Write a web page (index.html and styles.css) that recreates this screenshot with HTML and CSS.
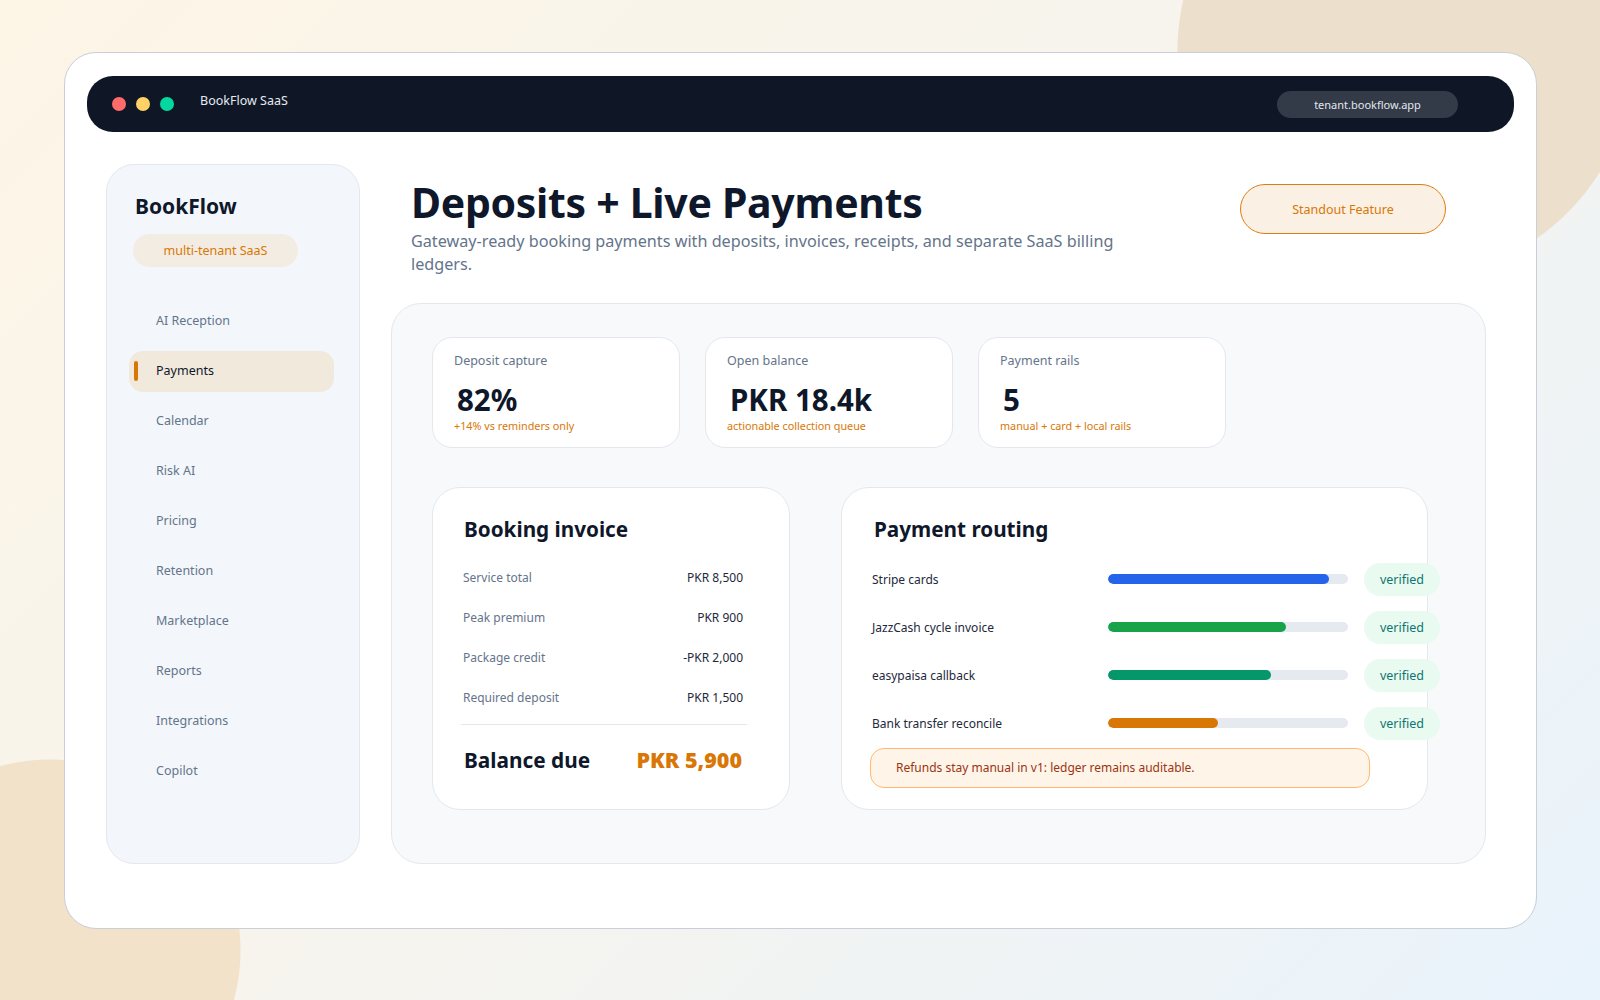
FILE: index.html
```html
<!DOCTYPE html>
<html lang="en">
<head>
  <meta charset="UTF-8" />
  <meta name="viewport" content="width=device-width, initial-scale=1.0"/>
  <title>BookFlow SaaS - Payments</title>
  <link rel="stylesheet" href="styles.css">
</head>
<body>
  <div class="frame">
    <div class="topbar">
      <span class="dot red"></span>
      <span class="dot yellow"></span>
      <span class="dot green"></span>
      <span class="app-name">BookFlow SaaS</span>
      <span class="url">tenant.bookflow.app</span>
    </div>

    <div class="layout">
      <aside class="sidebar">
        <div class="brand">BookFlow</div>
        <div class="tenant-pill">multi-tenant SaaS</div>
        <nav>
          <a href="#">AI Reception</a>
          <a href="#" class="active">Payments</a>
          <a href="#">Calendar</a>
          <a href="#">Risk AI</a>
          <a href="#">Pricing</a>
          <a href="#">Retention</a>
          <a href="#">Marketplace</a>
          <a href="#">Reports</a>
          <a href="#">Integrations</a>
          <a href="#">Copilot</a>
        </nav>
      </aside>

      <main>
        <div class="page-head">
          <div>
            <h1>Deposits + Live Payments</h1>
            <p class="subtitle">Gateway-ready booking payments with deposits, invoices, receipts, and separate SaaS billing ledgers.</p>
          </div>
          <button class="feature-btn">Standout Feature</button>
        </div>

        <section class="panel">
          <div class="stats">
            <div class="stat">
              <div class="stat-label">Deposit capture</div>
              <div class="stat-value">82%</div>
              <div class="stat-note">+14% vs reminders only</div>
            </div>
            <div class="stat">
              <div class="stat-label">Open balance</div>
              <div class="stat-value">PKR 18.4k</div>
              <div class="stat-note">actionable collection queue</div>
            </div>
            <div class="stat">
              <div class="stat-label">Payment rails</div>
              <div class="stat-value">5</div>
              <div class="stat-note">manual + card + local rails</div>
            </div>
          </div>

          <div class="cards">
            <div class="card invoice">
              <h2>Booking invoice</h2>
              <div class="line"><span>Service total</span><b>PKR 8,500</b></div>
              <div class="line"><span>Peak premium</span><b>PKR 900</b></div>
              <div class="line"><span>Package credit</span><b>-PKR 2,000</b></div>
              <div class="line"><span>Required deposit</span><b>PKR 1,500</b></div>
              <div class="total"><span>Balance due</span><strong>PKR 5,900</strong></div>
            </div>

            <div class="card routing">
              <h2>Payment routing</h2>
              <div class="route">
                <span>Stripe cards</span>
                <div class="track"><div class="fill blue" style="width: 92%"></div></div>
                <span class="badge">verified</span>
              </div>
              <div class="route">
                <span>JazzCash cycle invoice</span>
                <div class="track"><div class="fill green" style="width: 74%"></div></div>
                <span class="badge">verified</span>
              </div>
              <div class="route">
                <span>easypaisa callback</span>
                <div class="track"><div class="fill teal" style="width: 68%"></div></div>
                <span class="badge">verified</span>
              </div>
              <div class="route">
                <span>Bank transfer reconcile</span>
                <div class="track"><div class="fill orange" style="width: 46%"></div></div>
                <span class="badge">verified</span>
              </div>
              <div class="refund-note">Refunds stay manual in v1: ledger remains auditable.</div>
            </div>
          </div>
        </section>
      </main>
    </div>
  </div>
</body>
</html>
```

FILE: styles.css
```css
/* Base */
* { box-sizing: border-box; margin: 0; padding: 0; }
html, body { height: 100%; }
body {
  font-family: 'Noto Sans', 'Open Sans', sans-serif;
  color: #0f172a;
  /* two soft blobs over a warm-to-cool wash */
  background:
    radial-gradient(circle at 1406px 51px, #ecdfcb 228px, rgba(236,223,203,0) 229px),
    radial-gradient(circle at 50px 950px, #f2e2c9 190px, rgba(242,226,201,0) 191px),
    linear-gradient(135deg, #fdf5e6 0%, #f6f4ee 50%, #e9f3fc 100%);
  overflow: hidden;
  padding: 52px 63px 0 64px;
}

/* App window */
.frame {
  height: 877px;
  background: #fff;
  border: 1px solid #c9ced8;
  border-radius: 32px;
  padding: 23px 22px 0;
}

.topbar {
  display: flex; align-items: center;
  height: 56px;
  background: #0f1726;
  border-radius: 26px;
  padding: 0 56px 0 25px;
}
.dot { width: 14px; height: 14px; border-radius: 50%; margin-right: 10px; }
.dot.red { background: #ff6b6b; }
.dot.yellow { background: #ffd166; }
.dot.green { background: #06d6a0; }
.app-name { color: #e5e9f0; font-size: 12.5px; margin: 0 0 8px 16px; }
.url {
  margin-left: auto;
  background: #333a48; color: #e2e6ec;
  font-size: 11px;
  width: 181px; height: 27px; line-height: 27px;
  text-align: center; border-radius: 14px;
}

.layout {
  display: flex; gap: 31px;
  margin: 32px 28px 0 19px;
  height: 700px;
}

/* Sidebar */
.sidebar {
  width: 254px; flex-shrink: 0;
  background: #f3f7fb;
  border: 1px solid #e3e8ef;
  border-radius: 28px;
  padding: 27px 26px;
}
.brand { font-size: 21px; font-weight: 700; line-height: 28px; margin-left: 2px; color: #0f172a; }
.tenant-pill {
  margin-top: 14px;
  width: 165px; height: 33px; line-height: 33px;
  text-align: center; border-radius: 17px;
  background: #f3ece2; color: #d97706;
  font-size: 12.5px;
}
nav { display: flex; flex-direction: column; gap: 9px; margin: 34px 0 0 -4px; }
nav a {
  display: flex; align-items: center;
  width: 205px; height: 41px;
  padding: 0 0 2px 5px;
  border-radius: 14px;
  color: #64748b; text-decoration: none;
  font-size: 12.5px;
}
nav a::before {
  content: ''; width: 4px; height: 20px; border-radius: 3px;
  margin-right: 18px; background: transparent;
}
nav a.active { background: #f2e9dd; color: #0f172a; }
nav a.active::before { background: #d97706; }

/* Main */
main { flex: 1; display: flex; flex-direction: column; }
.page-head {
  display: flex; justify-content: space-between; align-items: flex-start;
  height: 139px;
  padding: 12px 40px 0 20px;
}
h1 { font-size: 41px; line-height: 52px; font-weight: 700; letter-spacing: -0.3px; color: #0f172a; }
.subtitle { font-size: 16.2px; line-height: 23px; color: #64748b; max-width: 715px; margin-top: 2px; }
.feature-btn {
  margin-top: 8px;
  width: 206px; height: 50px;
  border: 1px solid #e07d12; border-radius: 25px;
  background: #faf0e4; color: #d97706;
  font-family: inherit; font-size: 12.5px;
}

.panel {
  flex: 1;
  background: #f7f9fb;
  border: 1px solid #e3e8ef;
  border-radius: 30px;
  padding: 33px 40px 0;
}

.stats { display: flex; gap: 25px; }
.stat {
  width: 248px; height: 111px;
  background: #fff;
  border: 1px solid #e3e8ef;
  border-radius: 20px;
  padding: 14px 21px;
}
.stat-label { font-size: 12.5px; line-height: 18px; color: #64748b; }
.stat-value { font-size: 29.5px; line-height: 34px; font-weight: 700; margin-top: 13px; padding-left: 3px; color: #0f172a; }
.stat-note { font-size: 10.8px; line-height: 15px; margin-top: 1px; color: #d97706; }

.cards { display: flex; gap: 51px; margin-top: 39px; }
.card {
  height: 323px;
  background: #fff;
  border: 1px solid #e3e8ef;
  border-radius: 28px;
  padding-top: 28px;
}
.card h2 { font-size: 20.7px; line-height: 26px; font-weight: 700; color: #0f172a; }

.invoice { width: 358px; padding-left: 28px; padding-right: 42px; }
.invoice h2 { padding-left: 3px; margin-bottom: 15px; }
.line {
  display: flex; justify-content: space-between; align-items: center;
  height: 40px; padding: 0 4px 0 2px;
  font-size: 12px;
}
.line span { color: #64748b; }
.line b { font-weight: 400; color: #1e293b; }
.total {
  display: flex; justify-content: space-between; align-items: center;
  border-top: 1px solid #e3e8ef;
  margin-top: 7px; padding: 21px 5px 0 3px;
  font-size: 20.8px; line-height: 28px; font-weight: 700;
}
.total strong { color: #d97706; font-size: 21.5px; }

.routing { width: 587px; padding-left: 30px; }
.routing h2 { padding-left: 2px; margin-bottom: 13px; }
.route {
  display: grid; grid-template-columns: 220px 240px 76px; gap: 16px;
  align-items: center;
  height: 48px;
  font-size: 12px; color: #1e293b;
}
.track { height: 10px; background: #e5e9f0; border-radius: 5px; overflow: hidden; }
.fill { height: 100%; border-radius: 5px; }
.fill.blue { background: #2563eb; }
.fill.green { background: #16a34a; }
.fill.teal { background: #059669; }
.fill.orange { background: #d97706; }
.badge {
  height: 33px; line-height: 33px; border-radius: 17px;
  text-align: center;
  background: #e9faf1; color: #0f766e;
  font-size: 12.5px;
}
.refund-note {
  margin: 1px 0 0 -2px;
  width: 500px; height: 40px; line-height: 38px;
  border: 1px solid #fdba74; border-radius: 14px;
  background: #fff4e8; color: #9a3412;
  padding-left: 25px;
  font-size: 12px;
}
```
